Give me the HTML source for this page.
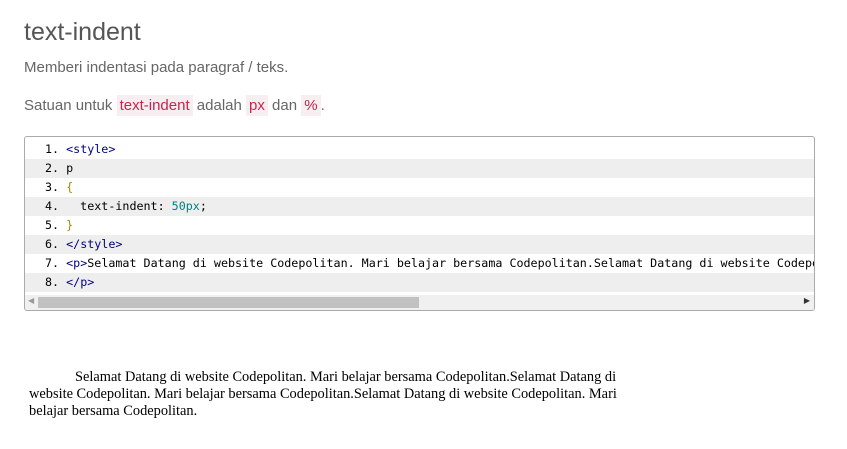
<html><head><style>
body{margin:0;background:#fff;width:847px;height:449px;overflow:hidden;font-family:"Liberation Sans",sans-serif;}
h2{position:absolute;left:24px;top:18px;margin:0;font-weight:300;font-size:25px;color:#555;}
.p1{position:absolute;left:24px;top:59px;font-size:15px;color:#666;}
.p2{position:absolute;left:24px;top:97px;font-size:15px;color:#666;}
code.i{background:#f6eef0;color:#c7254e;padding:2px 3px;font-family:inherit;}
.box{position:absolute;left:24px;top:136px;width:789px;height:173px;border:1px solid #aaa;border-radius:3px;overflow:hidden;background:#fff;}
.ln{height:19px;line-height:19px;font-family:"DejaVu Sans Mono","Liberation Mono",monospace;font-size:11.7px;color:#000;white-space:pre;padding-left:20px;}
.t{color:#000080}.num{color:#008080}.b{color:#aa8800}
.sb{position:absolute;left:0;bottom:0;width:789px;height:15px;background:#f0f0f0;}
.th{position:absolute;left:13px;top:2px;width:381px;height:11px;background:#c1c1c1;}
.out{position:absolute;left:29px;top:369px;width:600px;font-family:"Liberation Serif",serif;font-size:14.4px;line-height:17px;text-indent:46px;color:#000;}
</style></head><body>
<h2>text-indent</h2>
<div class="p1">Memberi indentasi pada paragraf / teks.</div>
<div class="p2">Satuan untuk <code class="i">text-indent</code> adalah <code class="i">px</code> dan <code class="i">%</code>.</div>
<div class="box">
<div style="height:3px"></div>
<div class="ln" style="background:#fff">1. <span class="t">&lt;style&gt;</span></div>
<div class="ln" style="background:#eee">2. p</div>
<div class="ln" style="background:#fff">3. <span class="b">{</span></div>
<div class="ln" style="background:#eee">4.   text-indent: <span class="num">50px</span>;</div>
<div class="ln" style="background:#fff">5. <span class="b">}</span></div>
<div class="ln" style="background:#eee">6. <span class="t">&lt;/style&gt;</span></div>
<div class="ln" style="background:#fff">7. <span class="t">&lt;p&gt;</span>Selamat Datang di website Codepolitan. Mari belajar bersama Codepolitan.Selamat Datang di website Codepolitan.</div>
<div class="ln" style="background:#eee">8. <span class="t">&lt;/p&gt;</span></div>
<div class="sb"><span style="position:absolute;left:3px;top:1px;font-size:8px;color:#999">◀</span><div class="th"></div><span style="position:absolute;right:4px;top:1px;font-size:8px;color:#333">▶</span></div>
</div>
<div class="out">Selamat Datang di website Codepolitan. Mari belajar bersama Codepolitan.Selamat Datang di website Codepolitan. Mari belajar bersama Codepolitan.Selamat Datang di website Codepolitan. Mari belajar bersama Codepolitan.</div>
</body></html>
